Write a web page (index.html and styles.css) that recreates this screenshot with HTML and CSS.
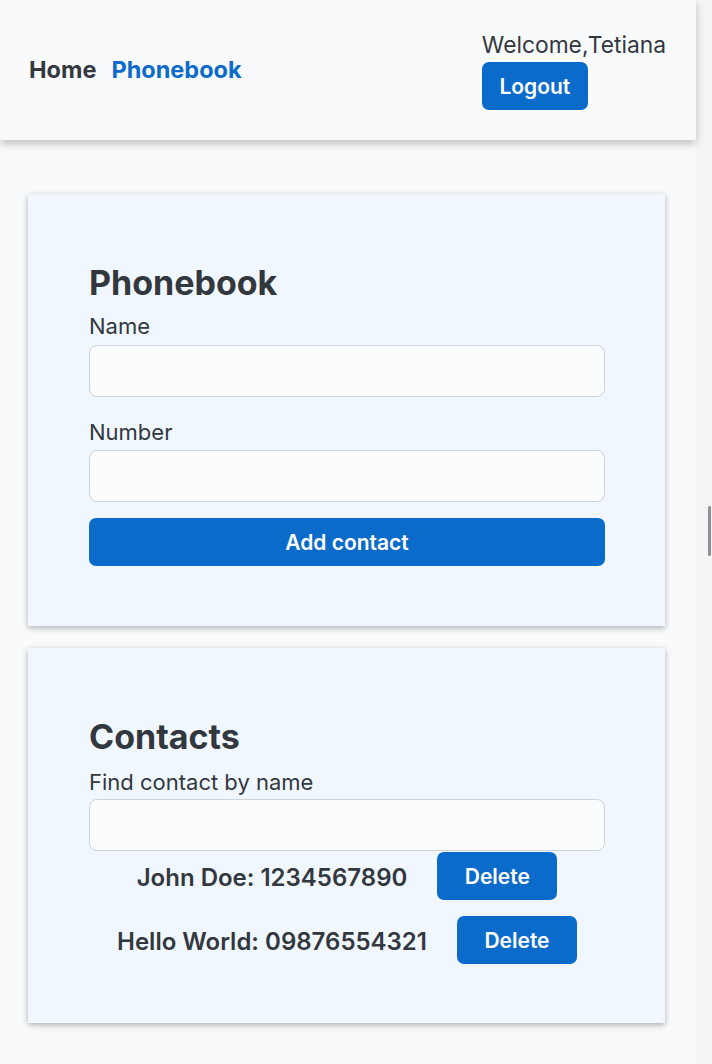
FILE: index.html
```html
<!DOCTYPE html>
<html lang="en">
<head>
<meta charset="utf-8">
<title>Phonebook</title>
<link rel="stylesheet" href="styles.css">
</head>
<body>
<div class="viewport">
  <div class="app">
    <header class="topbar">
      <nav class="nav">
        <a class="nav-link" href="#">Home</a>
        <a class="nav-link nav-link-active" href="#">Phonebook</a>
      </nav>
      <div class="user">
        <p class="user-greeting">Welcome,Tetiana</p>
        <button class="btn btn-logout" type="button">Logout</button>
      </div>
    </header>
    <main class="main">
      <section class="card">
        <h2 class="card-title">Phonebook</h2>
        <form class="form">
          <label class="field-label field-label-first" for="name">Name</label>
          <input class="field-input" id="name" type="text">
          <label class="field-label field-label-next" for="number">Number</label>
          <input class="field-input field-input-next" id="number" type="tel">
          <button class="btn btn-block" type="button">Add contact</button>
        </form>
      </section>
      <section class="card">
        <h2 class="card-title">Contacts</h2>
        <label class="field-label field-label-filter" for="filter">Find contact by name</label>
        <input class="field-input field-input-filter" id="filter" type="text">
        <ul class="contacts">
          <li class="contact">
            <span class="contact-text">John Doe: 1234567890</span>
            <button class="btn btn-delete" type="button">Delete</button>
          </li>
          <li class="contact">
            <span class="contact-text">Hello World: 09876554321</span>
            <button class="btn btn-delete" type="button">Delete</button>
          </li>
        </ul>
      </section>
    </main>
  </div>
  <div class="scrollbar"><div class="scrollbar-thumb"></div></div>
</div>
</body>
</html>
```
FILE: styles.css
```css
* { box-sizing: border-box; }

html, body {
  margin: 0;
  padding: 0;
  background: #f9fafc;
}

body {
  font-family: Inter, "Noto Sans", sans-serif;
  color: #32383e;
}

.viewport {
  display: flex;
  width: 712px;
  height: 1064px;
  overflow: hidden;
}

.app {
  width: 696px;
  flex: none;
  background: #f9fafc;
}

.scrollbar {
  width: 16px;
  flex: none;
  background: #f3f4f6;
  padding-top: 506px;
  padding-left: 12px;
}

.scrollbar-thumb {
  width: 3px;
  height: 50px;
  border-radius: 2px;
  background: #8e9094;
}

.topbar {
  height: 140px;
  padding: 0 30px 0 29px;
  display: flex;
  align-items: center;
  justify-content: space-between;
  background: #f9fafc;
  box-shadow: 0 4px 8px rgba(0, 0, 0, 0.22);
  position: relative;
}

.nav {
  display: flex;
  gap: 15px;
}

.nav-link {
  font-size: 23.5px;
  font-weight: 700;
  line-height: 28px;
  color: #32383e;
  text-decoration: none;
}

.nav-link-active {
  color: #0b6bcb;
}

.user {
  display: flex;
  flex-direction: column;
  align-items: flex-start;
  gap: 4px;
  padding-top: 2px;
}

.user-greeting {
  margin: 0;
  font-size: 22.8px;
  line-height: 26px;
  color: #32383e;
}

.btn {
  border: none;
  background: #0b6bcb;
  color: #fff;
  font-family: Inter, "Noto Sans", sans-serif;
  font-size: 21px;
  font-weight: 600;
  border-radius: 7px;
  height: 48px;
  padding: 0;
  cursor: pointer;
}

.btn-logout {
  width: 106px;
}

.btn-block {
  display: block;
  width: 100%;
  margin-top: 16px;
}

.btn-delete {
  width: 120px;
  flex: none;
}

.main {
  padding: 54px 0 0 28px;
  display: flex;
  flex-direction: column;
  gap: 22px;
}

.card {
  width: 637px;
  background: #f1f7fe;
  padding: 68px 60px 60px 61px;
  box-shadow: 0 2px 6px rgba(0, 0, 0, 0.3);
}

.card + .card {
  padding-bottom: 59px;
}

.card-title {
  margin: 0;
  font-size: 34px;
  line-height: 41px;
  font-weight: 700;
}

.form {
  margin: 0;
}

.field-label {
  display: block;
  font-size: 22px;
  line-height: 26px;
}

.field-label-first { margin-top: 10px; }
.field-label-next { margin-top: 22px; }
.field-label-filter { margin-top: 12px; }

.field-input {
  display: block;
  width: 100%;
  height: 52px;
  margin-top: 6px;
  border: 1px solid #cdd3da;
  border-radius: 8px;
  background: #fbfcfe;
  font-family: Inter, "Noto Sans", sans-serif;
  font-size: 20px;
  padding: 0 12px;
}

.field-input-next { margin-top: 5px; }
.field-input-filter { margin-top: 4px; }

.contacts {
  list-style: none;
  margin: 1px 0 0;
  padding: 0;
  display: flex;
  flex-direction: column;
  gap: 16px;
}

.contact {
  display: flex;
  justify-content: center;
  align-items: center;
  gap: 30px;
}

.contact-text {
  font-size: 24px;
  font-weight: 600;
  line-height: 29px;
  padding-top: 2px;
}
```
